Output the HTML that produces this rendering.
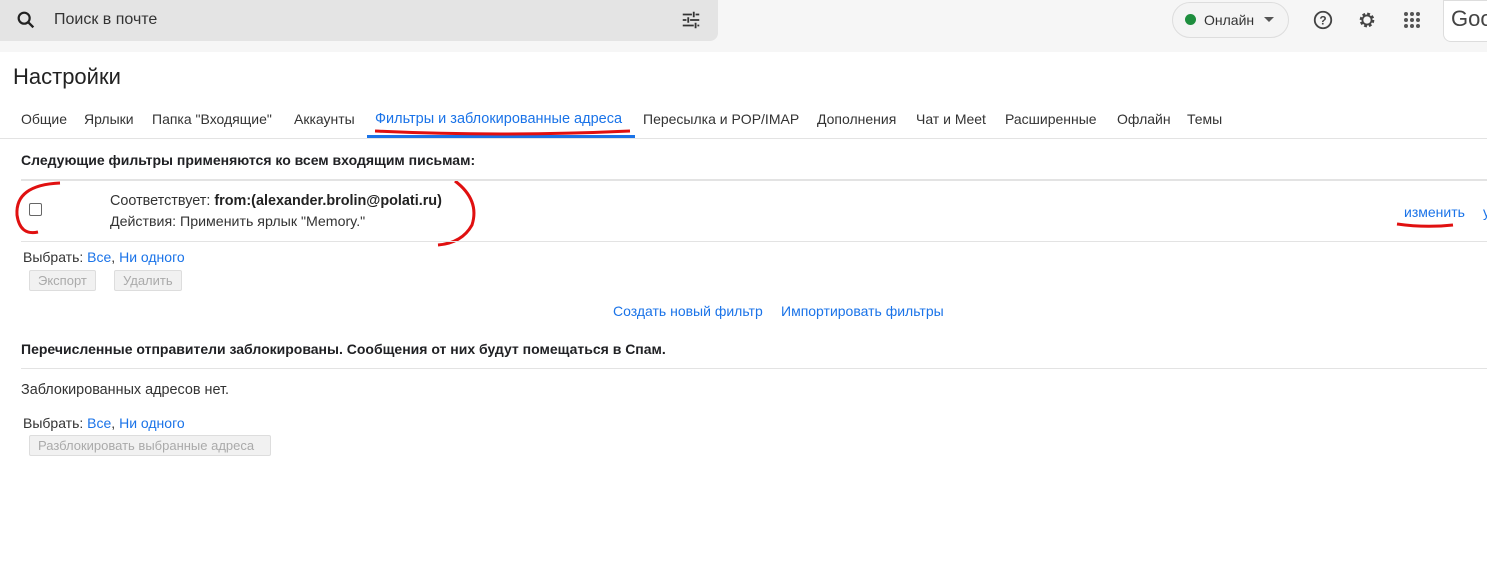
<!DOCTYPE html>
<html><head><meta charset="utf-8"><style>
*{margin:0;padding:0;box-sizing:border-box}
body{width:1487px;height:576px;overflow:hidden;background:#fff;font-family:"Liberation Sans",Arial,sans-serif;color:#202124;position:relative;font-size:14px}
.top{position:absolute;left:0;top:0;width:1487px;height:52px;background:#f6f6f6}
.search{position:absolute;left:0;top:0;width:718px;height:41px;background:#e4e4e4;border-radius:0 0 8px 0}
.a{position:absolute;white-space:nowrap}
.t{position:absolute;top:111px;font-size:14px;color:#333;white-space:nowrap}
.blue{color:#1a73e8 !important}
.btn{position:absolute;height:21px;border:1px solid #ddd;background:#f1f1f1;color:#aaa;font-size:13px;line-height:19px;padding:0 8px;border-radius:2px}
.line{position:absolute;height:1px;background:#e3e3e3}
</style></head><body>
<div class="top"></div>
<div class="search"></div>
<svg class="a" style="left:15px;top:9px" width="22" height="22" viewBox="0 0 24 24"><circle cx="10" cy="10" r="6" fill="none" stroke="#222" stroke-width="2.4"/><path d="M14.5 14.5L20 20" stroke="#222" stroke-width="2.6"/></svg>
<div class="a" style="left:54px;top:11px;font-size:16px;color:#333">Поиск в почте</div>
<svg class="a" style="left:680px;top:9px" width="22" height="22" viewBox="0 0 24 24"><path d="M3 6h10M17 6h4M15 3v6M3 12h4M11 12h10M9 9v6M3 18h12M19 18h2M17 15v6" stroke="#333" stroke-width="2"/></svg>
<div class="a" style="left:1172px;top:2px;width:117px;height:36px;border:1px solid #ddd;border-radius:18px;background:#f4f4f4"></div>
<div class="a" style="left:1185px;top:14px;width:11px;height:11px;border-radius:50%;background:#1e8e3e"></div>
<div class="a" style="left:1204px;top:12px;font-size:14px;color:#333">Онлайн</div>
<div class="a" style="left:1264px;top:17px;border:5px solid transparent;border-top-color:#555"></div>
<svg class="a" style="left:1312px;top:9px" width="22" height="22" viewBox="0 0 24 24"><circle cx="12" cy="12" r="9" fill="none" stroke="#444" stroke-width="2"/><text x="12" y="17" font-size="13" text-anchor="middle" fill="#444" font-family="Liberation Sans" font-weight="bold">?</text></svg>
<svg class="a" style="left:1356px;top:9px" width="22" height="22" viewBox="0 0 24 24"><circle cx="12" cy="12" r="6.5" fill="none" stroke="#444" stroke-width="3" stroke-dasharray="3 2.1"/><circle cx="12" cy="12" r="5" fill="none" stroke="#444" stroke-width="2"/></svg>
<svg class="a" style="left:1402px;top:10px" width="20" height="20" viewBox="0 0 20 20" fill="#555"><circle cx="4" cy="4" r="2"/><circle cx="10" cy="4" r="2"/><circle cx="16" cy="4" r="2"/><circle cx="4" cy="10" r="2"/><circle cx="10" cy="10" r="2"/><circle cx="16" cy="10" r="2"/><circle cx="4" cy="16" r="2"/><circle cx="10" cy="16" r="2"/><circle cx="16" cy="16" r="2"/></svg>
<div class="a" style="left:1443px;top:0;width:60px;height:42px;background:#fff;border:1px solid #ddd;border-radius:0 0 0 8px"></div>
<div class="a" style="left:1451px;top:6px;font-size:22px;color:#444">Goo</div>
<div class="a" style="left:13px;top:64px;font-size:22px;color:#222">Настройки</div>
<span class="t" style="left:21px">Общие</span>
<span class="t" style="left:84px">Ярлыки</span>
<span class="t" style="left:152px">Папка "Входящие"</span>
<span class="t" style="left:294px">Аккаунты</span>
<span class="t blue" style="left:375px;font-size:14.5px">Фильтры и заблокированные адреса</span>
<span class="t" style="left:643px">Пересылка и POP/IMAP</span>
<span class="t" style="left:817px">Дополнения</span>
<span class="t" style="left:916px">Чат и Meet</span>
<span class="t" style="left:1005px">Расширенные</span>
<span class="t" style="left:1117px">Офлайн</span>
<span class="t" style="left:1187px">Темы</span>
<div class="a" style="left:367px;top:135px;width:268px;height:3px;background:#1a73e8"></div>
<div class="line" style="left:0;top:138px;width:1487px"></div>
<svg class="a" style="left:0;top:0" width="1487" height="576"><path d="M375 131 Q500 137 630 131" stroke="#e01010" stroke-width="3" fill="none"/><path d="M60 183 Q15 185 17 215 Q20 236 38 232" stroke="#e01010" stroke-width="3" fill="none"/><path d="M455 181 Q480 200 472 225 Q462 243 438 245" stroke="#e01010" stroke-width="3" fill="none"/><path d="M1397 224 Q1425 228 1453 225" stroke="#e01010" stroke-width="3" fill="none"/></svg>
<div class="a" style="left:21px;top:152px;font-weight:bold;font-size:14px">Следующие фильтры применяются ко всем входящим письмам:</div>
<div class="line" style="left:21px;top:179px;width:1466px;height:2px"></div>
<div class="a" style="left:29px;top:203px;width:13px;height:13px;border:1px solid #666;border-radius:2px"></div>
<div class="a" style="left:110px;top:193px;font-size:14.4px;color:#333">Соответствует: <b style="color:#222">from:(alexander.brolin@polati.ru)</b></div>
<div class="a" style="left:110px;top:214px;font-size:14.2px;color:#333">Действия: Применить ярлык "Memory."</div>
<div class="a blue" style="left:1404px;top:204px;font-size:14px">изменить</div>
<div class="a blue" style="left:1483px;top:204px;font-size:14px">у</div>
<div class="line" style="left:21px;top:241px;width:1466px"></div>
<div class="a" style="left:23px;top:249px;color:#333">Выбрать: <span class="blue">Все</span>, <span class="blue">Ни одного</span></div>
<div class="btn" style="left:29px;top:270px">Экспорт</div>
<div class="btn" style="left:114px;top:270px">Удалить</div>
<div class="a blue" style="left:613px;top:303px">Создать новый фильтр</div>
<div class="a blue" style="left:781px;top:303px">Импортировать фильтры</div>
<div class="a" style="left:21px;top:341px;font-weight:bold">Перечисленные отправители заблокированы. Сообщения от них будут помещаться в Спам.</div>
<div class="line" style="left:21px;top:368px;width:1466px"></div>
<div class="a" style="left:21px;top:382px;color:#333;font-size:14.4px">Заблокированных адресов нет.</div>
<div class="a" style="left:23px;top:415px;color:#333">Выбрать: <span class="blue">Все</span>, <span class="blue">Ни одного</span></div>
<div class="btn" style="left:29px;top:435px;width:242px">Разблокировать выбранные адреса</div>
</body></html>
